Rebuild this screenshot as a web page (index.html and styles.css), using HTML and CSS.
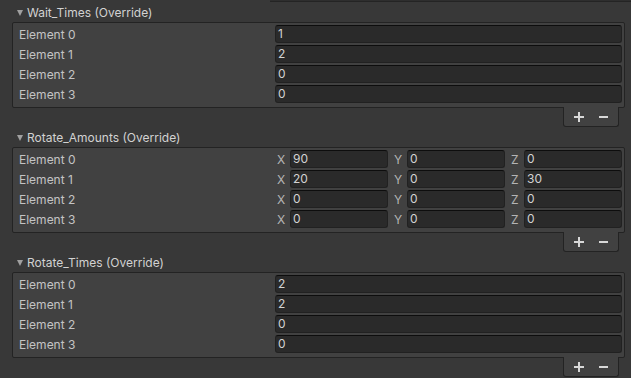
FILE: index.html
```html
<!DOCTYPE html>
<html lang="en">
<head>
    <meta charset="UTF-8">
    <meta name="viewport" content="width=device-width, initial-scale=1.0">
    <title>Inspector - Arrays</title>
    <link rel="stylesheet" href="styles.css">
</head>
<body>
    <!-- Campo anterior (cortado no topo) -->
    <div class="top-strip"><div class="top-field"></div></div>

    <!-- Wait_Times -->
    <div class="array">
        <div class="foldout"><span class="arrow"></span>Wait_Times (Override)</div>
        <div class="list">
            <div class="row"><span class="label">Element 0</span><div class="field">1</div></div>
            <div class="row"><span class="label">Element 1</span><div class="field">2</div></div>
            <div class="row"><span class="label">Element 2</span><div class="field">0</div></div>
            <div class="row"><span class="label">Element 3</span><div class="field">0</div></div>
        </div>
        <div class="footer-bar">
            <div class="buttons">
                <svg class="btn" width="10" height="10" viewBox="0 0 10 10"><path d="M5 0v10M0 5h10" stroke="#d8d8d8" stroke-width="2"/></svg>
                <svg class="btn" width="9" height="10" viewBox="0 0 9 10"><path d="M0 5h9" stroke="#d8d8d8" stroke-width="2"/></svg>
            </div>
        </div>
    </div>

    <!-- Rotate_Amounts -->
    <div class="array">
        <div class="foldout"><span class="arrow"></span>Rotate_Amounts (Override)</div>
        <div class="list">
            <div class="row">
                <span class="label">Element 0</span>
                <div class="vector">
                    <div class="axis"><span class="axis-label">X</span><div class="field">90</div></div>
                    <div class="axis"><span class="axis-label">Y</span><div class="field">0</div></div>
                    <div class="axis"><span class="axis-label">Z</span><div class="field">0</div></div>
                </div>
            </div>
            <div class="row">
                <span class="label">Element 1</span>
                <div class="vector">
                    <div class="axis"><span class="axis-label">X</span><div class="field">20</div></div>
                    <div class="axis"><span class="axis-label">Y</span><div class="field">0</div></div>
                    <div class="axis"><span class="axis-label">Z</span><div class="field">30</div></div>
                </div>
            </div>
            <div class="row">
                <span class="label">Element 2</span>
                <div class="vector">
                    <div class="axis"><span class="axis-label">X</span><div class="field">0</div></div>
                    <div class="axis"><span class="axis-label">Y</span><div class="field">0</div></div>
                    <div class="axis"><span class="axis-label">Z</span><div class="field">0</div></div>
                </div>
            </div>
            <div class="row">
                <span class="label">Element 3</span>
                <div class="vector">
                    <div class="axis"><span class="axis-label">X</span><div class="field">0</div></div>
                    <div class="axis"><span class="axis-label">Y</span><div class="field">0</div></div>
                    <div class="axis"><span class="axis-label">Z</span><div class="field">0</div></div>
                </div>
            </div>
        </div>
        <div class="footer-bar">
            <div class="buttons">
                <svg class="btn" width="10" height="10" viewBox="0 0 10 10"><path d="M5 0v10M0 5h10" stroke="#d8d8d8" stroke-width="2"/></svg>
                <svg class="btn" width="9" height="10" viewBox="0 0 9 10"><path d="M0 5h9" stroke="#d8d8d8" stroke-width="2"/></svg>
            </div>
        </div>
    </div>

    <!-- Rotate_Times -->
    <div class="array">
        <div class="foldout"><span class="arrow"></span>Rotate_Times (Override)</div>
        <div class="list">
            <div class="row"><span class="label">Element 0</span><div class="field">2</div></div>
            <div class="row"><span class="label">Element 1</span><div class="field">2</div></div>
            <div class="row"><span class="label">Element 2</span><div class="field">0</div></div>
            <div class="row"><span class="label">Element 3</span><div class="field">0</div></div>
        </div>
        <div class="footer-bar">
            <div class="buttons">
                <svg class="btn" width="10" height="10" viewBox="0 0 10 10"><path d="M5 0v10M0 5h10" stroke="#d8d8d8" stroke-width="2"/></svg>
                <svg class="btn" width="9" height="10" viewBox="0 0 9 10"><path d="M0 5h9" stroke="#d8d8d8" stroke-width="2"/></svg>
            </div>
        </div>
    </div>
</body>
</html>
```

FILE: styles.css
```css
/* Reset */
* {
    margin: 0;
    padding: 0;
    box-sizing: border-box;
}

body {
    background-color: #383838;
    font-family: Inter, "Noto Sans", sans-serif;
    font-size: 12px;
    color: #c4c4c4;
    overflow: hidden;
}

/* Campo cortado no topo */
.top-strip {
    height: 2px;
    padding-left: 270px;
}

.top-field {
    height: 2px;
    background-color: #2e2e2e;
    border-bottom: 1px solid #242424;
}

/* Bloco de array */
.array {
    padding: 0 6px 0 12px;
}

.foldout {
    height: 20px;
    display: flex;
    align-items: center;
    padding-left: 5px;
    color: #d2d2d2;
}

.arrow {
    width: 0;
    height: 0;
    border-left: 3.5px solid transparent;
    border-right: 3.5px solid transparent;
    border-top: 6px solid #a0a0a0;
    margin-right: 4px;
    margin-top: 1px;
}

.list {
    background-color: #414141;
    border: 1px solid #232323;
    border-radius: 2px;
    padding: 1px 2px 3px 6px;
}

.row {
    height: 20px;
    display: flex;
    align-items: center;
}

.label {
    width: 256px;
    flex-shrink: 0;
}

.field {
    flex: 1;
    height: 18px;
    background-color: #2a2a2a;
    border: 1px solid #212121;
    border-top-color: #0d0d0d;
    border-radius: 3px;
    padding-left: 2px;
    line-height: 16px;
    color: #d2d2d2;
}

/* Vetor X Y Z */
.vector {
    flex: 1;
    display: flex;
    gap: 4px;
}

.axis {
    flex: 1;
    display: flex;
    align-items: center;
}

.axis-label {
    width: 15px;
    padding-left: 2px;
    flex-shrink: 0;
    color: #b4b4b4;
}

/* Botões + / - */
.footer-bar {
    display: flex;
    justify-content: flex-end;
    padding-right: 6px;
}

.buttons {
    width: 56px;
    height: 20px;
    background-color: #414141;
    border: 1px solid #232323;
    border-top: none;
    border-radius: 0 0 3px 3px;
    display: flex;
    align-items: center;
    gap: 15px;
    padding-left: 10px;
    margin-top: -1px;
    position: relative;
}

.btn {
    display: block;
}
```
